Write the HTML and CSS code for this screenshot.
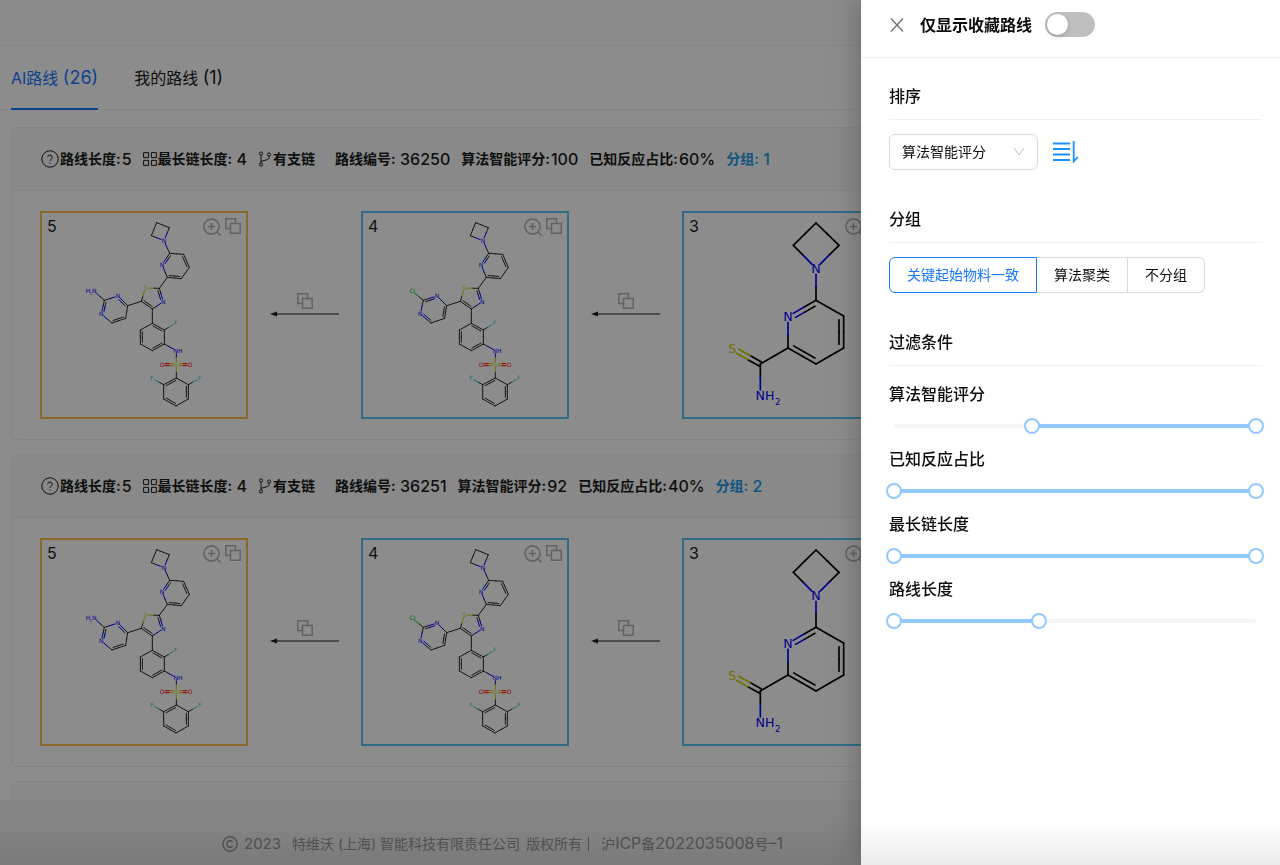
FILE: index.html
```html
<!DOCTYPE html>
<html lang="zh-CN">
<head>
<meta charset="utf-8">
<meta name="viewport" content="width=device-width, initial-scale=1">
<title>AI路线</title>
<link rel="stylesheet" href="styles.css">
</head>
<body>
<svg class="sprite" aria-hidden="true">
  <symbol id="icon-help" viewBox="0 0 18 18"><circle cx="9" cy="9" r="8.2"/><path d="M6.7 7.2a2.3 2.2 0 1 1 3.5 1.9C9.300 9.700 9 10 9 11"/><path d="M9 12.600v1.100"/></symbol>
  <symbol id="icon-grid" viewBox="0 0 14 14"><path d="M.6.6h5v5h-5zM8.400.6h5v5h-5zM.6 8.400h5v5h-5zM8.400 8.400h5v5h-5z"/></symbol>
  <symbol id="icon-branch" viewBox="0 0 14 16"><circle cx="3" cy="2.500" r="1.600"/><circle cx="3" cy="13.500" r="1.600"/><circle cx="11" cy="3.500" r="1.600"/><path d="M3 4.100v7.800M11 5.100v1.400c0 1.400-.8 1.900-2 2.200L3 10.400"/></symbol>
  <symbol id="icon-zoom" viewBox="0 0 18 18"><circle cx="8.500" cy="8.500" r="7.600"/><path d="M8.500 5v7M5 8.500h7M14 14l3.500 3.500"/></symbol>
  <symbol id="icon-copy" viewBox="0 0 16 16"><path d="M5 10.500H.8V.8h9.700V5M5.500 5.500h9.700v9.700H5.500z"/></symbol>
</svg>

<div class="page">
  <header class="topbar"></header>
  <nav class="tabs">
    <a class="tab tab-active" href="#ai">AI路线 <span class="tab-count">(26)</span></a>
    <a class="tab" href="#mine">我的路线 <span class="tab-count">(1)</span></a>
  </nav>
  <main class="routes">
    <article class="card">
      <header class="card-head">
        <span class="fact"><svg class="icon-18"><use href="#icon-help"/></svg>路线长度:<span class="num">5</span></span>
        <span class="fact"><svg class="icon-14"><use href="#icon-grid"/></svg>最长链长度:&nbsp;<span class="num">4</span></span>
        <span class="fact fact-wide"><svg class="icon-branch"><use href="#icon-branch"/></svg>有支链</span>
        <span class="fact">路线编号:&nbsp;<span class="num">36250</span></span>
        <span class="fact">算法智能评分:<span class="num">100</span></span>
        <span class="fact">已知反应占比:<span class="num">60%</span></span>
        <a class="fact group-link" href="#group-1">分组:&nbsp;<span class="num">1</span></a>
      </header>
      <div class="chain">
        <section class="node node-target">
          <svg class="molecule" data-molecule="amine" viewBox="36 39 612 612"></svg>
          <span class="node-index">5</span>
          <span class="node-tools"><svg class="icon-18"><use href="#icon-zoom"/></svg><svg class="icon-16"><use href="#icon-copy"/></svg></span>
        </section>
        <div class="step"><svg class="icon-16"><use href="#icon-copy"/></svg><svg class="arrow" viewBox="0 0 69 8"><path d="M6 4h63"/><path class="arrow-tip" d="M0 4l7-2.500v5z"/></svg></div>
        <section class="node">
          <svg class="molecule" data-molecule="chloride" viewBox="39 39 612 612"></svg>
          <span class="node-index">4</span>
          <span class="node-tools"><svg class="icon-18"><use href="#icon-zoom"/></svg><svg class="icon-16"><use href="#icon-copy"/></svg></span>
        </section>
        <div class="step"><svg class="icon-16"><use href="#icon-copy"/></svg><svg class="arrow" viewBox="0 0 69 8"><path d="M6 4h63"/><path class="arrow-tip" d="M0 4l7-2.500v5z"/></svg></div>
        <section class="node">
          <svg class="molecule molecule-large" data-molecule="thioamide" viewBox="72 39 612 612"></svg>
          <span class="node-index">3</span>
          <span class="node-tools"><svg class="icon-18"><use href="#icon-zoom"/></svg><svg class="icon-16"><use href="#icon-copy"/></svg></span>
        </section>
      </div>
    </article>

    <article class="card">
      <header class="card-head">
        <span class="fact"><svg class="icon-18"><use href="#icon-help"/></svg>路线长度:<span class="num">5</span></span>
        <span class="fact"><svg class="icon-14"><use href="#icon-grid"/></svg>最长链长度:&nbsp;<span class="num">4</span></span>
        <span class="fact fact-wide"><svg class="icon-branch"><use href="#icon-branch"/></svg>有支链</span>
        <span class="fact">路线编号:&nbsp;<span class="num">36251</span></span>
        <span class="fact">算法智能评分:<span class="num">92</span></span>
        <span class="fact">已知反应占比:<span class="num">40%</span></span>
        <a class="fact group-link" href="#group-2">分组:&nbsp;<span class="num">2</span></a>
      </header>
      <div class="chain">
        <section class="node node-target">
          <svg class="molecule" data-molecule="amine" viewBox="36 39 612 612"></svg>
          <span class="node-index">5</span>
          <span class="node-tools"><svg class="icon-18"><use href="#icon-zoom"/></svg><svg class="icon-16"><use href="#icon-copy"/></svg></span>
        </section>
        <div class="step"><svg class="icon-16"><use href="#icon-copy"/></svg><svg class="arrow" viewBox="0 0 69 8"><path d="M6 4h63"/><path class="arrow-tip" d="M0 4l7-2.500v5z"/></svg></div>
        <section class="node">
          <svg class="molecule" data-molecule="chloride" viewBox="39 39 612 612"></svg>
          <span class="node-index">4</span>
          <span class="node-tools"><svg class="icon-18"><use href="#icon-zoom"/></svg><svg class="icon-16"><use href="#icon-copy"/></svg></span>
        </section>
        <div class="step"><svg class="icon-16"><use href="#icon-copy"/></svg><svg class="arrow" viewBox="0 0 69 8"><path d="M6 4h63"/><path class="arrow-tip" d="M0 4l7-2.500v5z"/></svg></div>
        <section class="node">
          <svg class="molecule molecule-large" data-molecule="thioamide" viewBox="72 39 612 612"></svg>
          <span class="node-index">3</span>
          <span class="node-tools"><svg class="icon-18"><use href="#icon-zoom"/></svg><svg class="icon-16"><use href="#icon-copy"/></svg></span>
        </section>
      </div>
    </article>

    <article class="card"><header class="card-head"></header></article>
  </main>
  <footer class="footer">
    <svg class="icon-copyright" viewBox="0 0 16 16"><circle cx="8" cy="8" r="7.200"/><path d="M10.600 6.100A2.900 2.900 0 0 0 5.200 7.600v.8a2.900 2.900 0 0 0 5.400 1.500"/></svg>
    <span class="footer-year">2023</span>
    <span class="footer-owner">特维沃 (上海) 智能科技有限责任公司</span>
    <span class="footer-rights">版权所有</span>
    <span class="footer-bar"></span>
    <a class="footer-icp" href="#icp">沪<span class="num">ICP</span>备<span class="num">2022035008</span>号<span class="num">–1</span></a>
  </footer>
</div>

<div class="mask"></div>

<aside class="drawer">
  <header class="drawer-head">
    <button class="close" type="button" aria-label="关闭"><svg viewBox="0 0 14 14"><path d="M1 .5l12 13M13 .5l-12 13"/></svg></button>
    <label class="drawer-title" for="only-favorites">仅显示收藏路线</label>
    <input class="switch" id="only-favorites" type="checkbox" role="switch">
  </header>
  <div class="drawer-body">
    <section class="section">
      <h2 class="section-title">排序</h2>
      <div class="section-row">
        <div class="select-box">
          <select class="select" aria-label="排序"><option>算法智能评分</option></select>
          <svg class="chevron" viewBox="0 0 12 10"><path d="M1 1l5 7 5-7"/></svg>
        </div>
        <button class="sort" type="button" aria-label="降序"><svg viewBox="0 0 26 22"><path d="M0 2.500h17M0 8h17M0 13.500h17M0 19h17M20.700 0v20.500l4-4.500"/></svg></button>
      </div>
    </section>
    <section class="section">
      <h2 class="section-title">分组</h2>
      <div class="section-row">
        <div class="segments">
          <label class="segment"><input type="radio" name="group" checked>关键起始物料一致</label>
          <label class="segment"><input type="radio" name="group">算法聚类</label>
          <label class="segment"><input type="radio" name="group">不分组</label>
        </div>
      </div>
    </section>
    <section class="section">
      <h2 class="section-title">过滤条件</h2>
      <div class="filters">
        <div class="filter">
          <h3 class="filter-title" id="f-score">算法智能评分</h3>
          <div class="slider"><div class="rail"><div class="fill" style="left:38%;width:62%"></div></div><input type="range" aria-labelledby="f-score" value="38"><input type="range" aria-labelledby="f-score" value="100"></div>
        </div>
        <div class="filter">
          <h3 class="filter-title" id="f-known">已知反应占比</h3>
          <div class="slider"><div class="rail"><div class="fill" style="left:0%;width:100%"></div></div><input type="range" aria-labelledby="f-known" value="0"><input type="range" aria-labelledby="f-known" value="100"></div>
        </div>
        <div class="filter">
          <h3 class="filter-title" id="f-chain">最长链长度</h3>
          <div class="slider"><div class="rail"><div class="fill" style="left:0%;width:100%"></div></div><input type="range" aria-labelledby="f-chain" value="0"><input type="range" aria-labelledby="f-chain" value="100"></div>
        </div>
        <div class="filter">
          <h3 class="filter-title" id="f-length">路线长度</h3>
          <div class="slider"><div class="rail"><div class="fill" style="left:0%;width:40%"></div></div><input type="range" aria-labelledby="f-length" value="0"><input type="range" aria-labelledby="f-length" value="40"></div>
        </div>
      </div>
    </section>
  </div>
</aside>
<div class="bottom-shade"></div>
<script src="molecules.js"></script>
</body>
</html>
```

FILE: styles.css
```css
* { box-sizing: border-box; }

body {
  margin: 0;
  color: #1a1a1a;
  font-family: Inter, "Noto Sans CJK SC", sans-serif;
  font-size: 14px;
  line-height: 22px;
}

a { color: inherit; text-decoration: none; }
svg { display: block; flex: none; fill: none; stroke: currentColor; }
button { padding: 0; border: 0; background: none; font: inherit; cursor: pointer; }
h2, h3 { margin: 0; }

.sprite { position: absolute; width: 0; height: 0; }
.icon-18 { width: 18px; height: 18px; }
.icon-16 { width: 16px; height: 16px; }
.icon-14 { width: 14px; height: 14px; }
.icon-branch { width: 14px; height: 16px; }
.num { font-size: 16px; font-weight: 500; }

/* Page under the mask */
.page {
  display: flex;
  flex-direction: column;
  height: 100vh;
  overflow: hidden;
  background: #fff;
}

.topbar { flex: none; height: 46px; border-bottom: 1px solid #f0f0f0; background: #fdfdfd; }

.tabs {
  display: flex;
  flex: none;
  gap: 36px;
  height: 64px;
  padding-left: 11px;
  border-bottom: 1px solid #f0f0f0;
  font-size: 16px;
  line-height: 64px;
}
.tab { height: 64px; }
.tab-active { border-bottom: 2px solid #1677ff; color: #1677ff; }
.tab-count { font-size: 18px; }

.routes {
  display: flex;
  flex: 1;
  flex-direction: column;
  gap: 14px;
  min-height: 0;
  padding: 17px 11px 0;
  overflow: hidden;
}

.card { flex: none; border: 1px solid #f0f0f0; border-radius: 6px; overflow: hidden; }
.card-head {
  display: flex;
  align-items: center;
  gap: 11px;
  height: 63px;
  padding-left: 29px;
  border-bottom: 1px solid #f0f0f0;
  background: #fafafa;
  font-weight: 700;
  white-space: nowrap;
}
.fact { display: flex; align-items: center; gap: 1px; }
.fact-wide { margin-right: 9px; }
.group-link { color: #1c9be6; }

.chain { display: flex; padding: 20px 28px; }

.node { position: relative; flex: none; width: 208px; height: 208px; border: 2px solid #5bc4f5; }
.node-target { border-color: #ffc04d; }
.molecule { width: 100%; height: 100%; stroke-width: 3; font-family: "DejaVu Sans", sans-serif; font-size: 18px; }
.molecule-large { stroke-width: 5; font-size: 38px; }
.molecule text { stroke: none; text-anchor: middle; }
.node-index { position: absolute; top: 2px; left: 5px; font-size: 16px; }
.node-tools { position: absolute; top: 5px; right: 5px; display: flex; gap: 4px; color: #b3b3b3; }
.node-tools svg, .step .icon-16 { stroke-width: 1.500; }

.step {
  display: flex;
  flex: none;
  flex-direction: column;
  align-items: center;
  width: 113px;
  padding-top: 82px;
}
.step .icon-16 { color: #b3b3b3; }
.arrow { width: 69px; height: 8px; margin-top: 1px; }
.arrow-tip { fill: currentColor; stroke: none; }

.footer {
  display: flex;
  flex: none;
  align-items: center;
  height: 65px;
  padding: 22px 0 0 222px;
  background: #f3f3f3;
  color: #999;
  white-space: nowrap;
}
.icon-copyright { width: 16px; height: 16px; stroke-width: 1.500; }
.footer-year { margin: 0 11px 0 6px; font-size: 15px; }
.footer-rights { margin: 0 6px; }
.footer-bar { width: 1px; height: 14px; margin-right: 12px; background: #999; }
.footer .num { font-size: 15px; font-weight: 400; }
.footer .footer-icp .num { font-size: 16px; }

.mask { position: fixed; inset: 0; background: rgba(0, 0, 0, .45); }

.bottom-shade {
  position: fixed;
  inset: auto 0 0;
  height: 44px;
  background: linear-gradient(rgba(0, 0, 0, 0), rgba(0, 0, 0, .08));
  pointer-events: none;
}

/* Drawer */
.drawer {
  position: fixed;
  inset: 0 0 0 auto;
  width: 419px;
  background: #fff;
  color: #0d0d0d;
  box-shadow: -6px 0 16px rgba(0, 0, 0, .1), -9px 0 28px 8px rgba(0, 0, 0, .07);
}
.drawer-head {
  display: flex;
  align-items: center;
  height: 58px;
  padding: 0 29px 8px;
  border-bottom: 1px solid #f0f0f0;
}
.close { color: #737373; }
.close svg { width: 14px; height: 14px; stroke-width: 1.400; }
.drawer-title { margin: 0 13px 0 16px; font-size: 16px; font-weight: 700; }

.switch {
  width: 50px;
  height: 25px;
  margin: 0;
  padding: 2px;
  border-radius: 13px;
  background: #bfbfbf;
  appearance: none;
}
.switch::before {
  display: block;
  width: 21px;
  height: 21px;
  border-radius: 50%;
  background: #fff;
  box-shadow: 0 2px 4px rgba(0, 35, 11, .2);
  content: "";
}
.switch:checked { background: #1677ff; }

.drawer-body { padding: 23px 18px 0 28px; }
.section { min-height: 123px; }
.section-title {
  padding: 4px 0 12px;
  border-bottom: 1px solid #f0f0f0;
  font-size: 16px;
  font-weight: 500;
  line-height: 22px;
}
.section-row { display: flex; align-items: center; gap: 15px; padding-top: 14px; }

.select-box { position: relative; }
.select {
  display: block;
  width: 149px;
  height: 36px;
  padding: 0 12px;
  border: 1px solid #d9d9d9;
  border-radius: 6px;
  background: #fff;
  color: inherit;
  font: inherit;
  appearance: none;
}
.chevron { position: absolute; top: 13px; right: 13px; width: 12px; height: 10px; color: #bfbfbf; pointer-events: none; }
.sort { color: #1890ff; }
.sort svg { width: 26px; height: 22px; stroke-width: 1.800; }

.segments { display: flex; }
.segment {
  height: 36px;
  padding: 0 17px;
  border: 1px solid #d9d9d9;
  border-left-width: 0;
  line-height: 34px;
}
.segment:first-child { border-left-width: 1px; border-radius: 6px 0 0 6px; }
.segment:last-child { border-radius: 0 6px 6px 0; }
.segment:has(:checked) { border-color: #1677ff; color: #1677ff; }
.segment input { position: absolute; margin: 0; opacity: 0; pointer-events: none; }

.filters { padding-top: 16px; }
.filter { height: 65px; padding-top: 1px; }
.filter-title { font-size: 16px; font-weight: 500; line-height: 22px; }
.slider { position: relative; height: 16px; margin: 13px -2px 0 -3px; padding: 6px 8px; }
.rail { position: relative; height: 4px; border-radius: 2px; background: #f5f5f5; }
.fill { position: absolute; height: 100%; background: #91caff; }
.slider input {
  position: absolute;
  inset: 0;
  width: 100%;
  height: 16px;
  margin: 0;
  background: none;
  appearance: none;
  pointer-events: none;
}
.slider input::-webkit-slider-thumb {
  width: 16px;
  height: 16px;
  border: 2px solid #91caff;
  border-radius: 50%;
  background: #fff;
  appearance: none;
  pointer-events: auto;
}
```

FILE: molecules.js
```js
// Skeletal formulas: atoms are [x, y, element?, label?], bonds are "from to kind".
const COLORS = { N: "#0000ff", S: "#cccc00", F: "#33cccc", O: "#ff0000", Cl: "#00cc00" };

const core = {
  atoms: {
    a1: [380, 68], a2: [418, 83], a3: [402, 122, "N"], a4: [364, 107],
    p1: [419, 160], p2: [461, 163], p3: [478, 202], p4: [454, 236], p5: [412, 232], p6: [396, 194, "N"],
    t1: [346, 264, "S"], t2: [388, 265], t3: [400, 305, "N"], t4: [367, 327], t5: [334, 304],
    m1: [293, 317], m2: [264, 288, "N"], m3: [223, 301], m4: [214, 342, "N"], m5: [246, 369], m6: [287, 355],
    b1: [367, 370], b2: [403, 390], b3: [403, 432], b4: [367, 452], b5: [331, 432], b6: [331, 390],
    f1: [437, 369, "F"], n1: [439, 452, "N", "NH"], s1: [439, 494, "S"], o1: [396, 494, "O"], o2: [480, 494, "O"],
    c1: [439, 534], c2: [475, 554], c3: [475, 597], c4: [438, 618], c5: [401, 597], c6: [401, 554],
    f2: [366, 535, "F"], f3: [509, 535, "F"]
  },
  bonds: [
    "a1 a2", "a2 a3", "a3 a4", "a4 a1", "a3 p1",
    "p1 p2", "p2 p3 p", "p3 p4", "p4 p5 p", "p5 p6", "p6 p1 p", "p5 t2",
    "t1 t2", "t2 t3 t", "t3 t4", "t4 t5 t", "t5 t1", "t5 m1", "t4 b1",
    "b1 b2 b", "b2 b3", "b3 b4 b", "b4 b5", "b5 b6 b", "b6 b1", "b2 f1", "b3 n1",
    "n1 s1", "s1 o1 =", "s1 o2 =", "s1 c1",
    "c1 c2", "c2 c3 c", "c3 c4", "c4 c5 c", "c5 c6", "c6 c1 c", "c6 f2", "c2 f3"
  ],
  rings: { p: [437, 198], t: [367, 293], m: [255, 329], b: [367, 411], c: [438, 576] },
  offset: 6, clear: 9, carbon: "#262626"
};

const molecules = {
  amine: {
    ...core,
    atoms: { ...core.atoms, x1: [193, 274, "N", "H2N"] },
    bonds: [...core.bonds, "m1 m2 m", "m2 m3", "m3 m4 m", "m4 m5", "m5 m6 m", "m6 m1", "m3 x1"]
  },
  chloride: {
    ...core, shift: -3,
    atoms: { ...core.atoms, x1: [190, 274, "Cl"] },
    bonds: [...core.bonds, "m1 m2", "m2 m3 m", "m3 m4", "m4 m5 m", "m5 m6", "m6 m1 m", "m3 x1"]
  },
  thioamide: {
    atoms: {
      a1: [468, 69], a2: [537, 136], a3: [468, 205, "N"], a4: [400, 136],
      p1: [468, 301], p2: [551, 348], p3: [551, 444], p4: [468, 492], p5: [384, 444], p6: [384, 349, "N"],
      k: [301, 492], s: [217, 445, "S"], n: [301, 588, "N", "NH2"]
    },
    bonds: ["a1 a2", "a2 a3", "a3 a4", "a4 a1", "a3 p1", "p1 p2", "p2 p3 p", "p3 p4", "p4 p5 p", "p5 p6", "p6 p1 p", "p5 k", "k s =", "k n"],
    rings: { p: [468, 396] },
    offset: 14, clear: 18, carbon: "#000"
  }
};

function drawMolecule(svg, mol) {
  const big = mol.offset > 10;
  const out = [];
  const line = (x1, y1, x2, y2, color) =>
    out.push(`<path d="M${x1.toFixed(1)} ${y1.toFixed(1)}L${x2.toFixed(1)} ${y2.toFixed(1)}" stroke="${color}"/>`);
  const bond = (a, b, dx, dy, trim) => {
    const len = Math.hypot(b[0] - a[0], b[1] - a[1]);
    const ux = (b[0] - a[0]) / len, uy = (b[1] - a[1]) / len;
    const s = a[2] ? mol.clear : trim, e = b[2] ? mol.clear : trim;
    const x1 = a[0] + ux * s + dx, y1 = a[1] + uy * s + dy;
    const x2 = b[0] - ux * e + dx, y2 = b[1] - uy * e + dy;
    const mx = (x1 + x2) / 2, my = (y1 + y2) / 2;
    line(x1, y1, mx, my, COLORS[a[2]] || mol.carbon);
    line(mx, my, x2, y2, COLORS[b[2]] || mol.carbon);
  };
  for (const spec of mol.bonds) {
    const [from, to, kind] = spec.split(" ");
    const a = mol.atoms[from], b = mol.atoms[to];
    const len = Math.hypot(b[0] - a[0], b[1] - a[1]);
    let nx = -(b[1] - a[1]) / len, ny = (b[0] - a[0]) / len;
    if (kind === "=") {
      const d = big ? 7 : 3;
      bond(a, b, nx * d, ny * d, 0);
      bond(a, b, -nx * d, -ny * d, 0);
      continue;
    }
    bond(a, b, 0, 0, 0);
    if (kind) {
      const c = mol.rings[kind];
      if (nx * (c[0] - a[0]) + ny * (c[1] - a[1]) < 0) { nx = -nx; ny = -ny; }
      bond(a, b, nx * mol.offset, ny * mol.offset, len * 0.12);
    }
  }
  for (const [x, y, element, label] of Object.values(mol.atoms)) {
    if (!element) continue;
    const text = (dx, dy, t, attrs = "") =>
      out.push(`<text x="${x + dx}" y="${y + dy}" fill="${COLORS[element]}"${attrs}>${t}</text>`);
    const base = big ? 13 : 6;
    if (label === "NH2") {
      text(14, base, "NH");
      text(52, base + 14, "2", ' font-size="26"');
    } else if (label === "H2N") {
      text(-19, base, "H");
      text(-10, base + 5, "2", ' font-size="11"');
      text(0, base, "N");
    } else {
      text(label === "NH" ? 5 : 0, base, label || element);
    }
  }
  svg.innerHTML = `<g stroke-linecap="round" transform="translate(${mol.shift || 0} 0)">${out.join("")}</g>`;
}

document.querySelectorAll("[data-molecule]").forEach(svg => drawMolecule(svg, molecules[svg.dataset.molecule]));
```
